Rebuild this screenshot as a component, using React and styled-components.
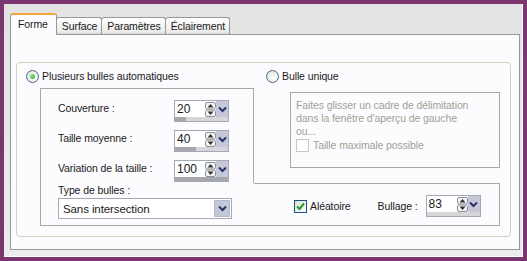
import React from 'react';
import styled, { createGlobalStyle } from 'styled-components';

const GlobalStyle = createGlobalStyle`
  html, body {
    margin: 0;
    padding: 0;
    background: #7b3671;
  }
  body {
    font-family: "Liberation Sans", Arial, sans-serif;
    font-size: 10.5px;
    letter-spacing: -0.1px;
    color: #1a1a1a;
  }
`;

const Window = styled.div`
  width: 527px;
  height: 261px;
  box-sizing: border-box;
  border: 4px solid #7b3671;
  background: linear-gradient(#e3e3e3, #ececec);
  box-shadow: inset -1px -1px 0 #ffffff;
  padding: 9px 3px 0 6px;
`;

const TabStrip = styled.div`
  display: flex;
  align-items: flex-end;
  height: 21px;
`;

const Tab = styled.div`
  position: relative;
  box-sizing: border-box;
  height: ${p => (p.$active ? '22px' : '17px')};
  margin-bottom: ${p => (p.$active ? '-1px' : '0')};
  z-index: ${p => (p.$active ? 2 : 1)};
  padding: ${p => (p.$active ? '3px 8px 0 7px' : '2px 4px 0 5px')};
  border: 1px solid #919b9c;
  border-bottom: none;
  border-top: ${p => (p.$active ? '2px solid #f2a83b' : '1px solid #919b9c')};
  border-radius: 3px 3px 0 0;
  background: ${p => (p.$active ? '#fcfcfe' : 'linear-gradient(#ffffff, #ececeb 85%, #dcdcd8)')};
  margin-left: ${p => (p.$first ? '0' : '-1px')};
  white-space: nowrap;
  line-height: 13px;
`;

const Panel = styled.div`
  box-sizing: border-box;
  height: 216px;
  border: 1px solid #919b9c;
  background: #fcfcfe;
  padding: 27px 8px 0 5px;
`;

const Group = styled.div`
  box-sizing: border-box;
  height: 175px;
  border: 1px solid #d0d0bf;
  border-radius: 4px;
  padding: 6px 10px 0 9px;
`;

const RadioRow = styled.div`
  display: grid;
  grid-template-columns: 240px 1fr;
  height: 14px;
`;

const Option = styled.label`
  display: flex;
  align-items: center;
  gap: 3px;
  line-height: 14px;
  color: ${p => (p.$disabled ? '#a19f95' : 'inherit')};
`;

const Body = styled.div`
  margin: 5px 0 0 14px;
  display: grid;
  grid-template-columns: 214px 246px;
  grid-template-rows: 95px 43px;
`;

const Frame = styled.div`
  box-sizing: border-box;
  border-color: #a9a9a9;
  border-style: solid;
  border-width: ${p => p.$edges};
`;

const LeftTop = styled(Frame)`
  padding: 11px 0 0 17px;
  display: flex;
  flex-direction: column;
  gap: 8px;
`;

const LeftBottom = styled(Frame)`
  padding: 0 0 0 17px;
`;

const RightTop = styled.div`
  padding: 4px 0 0 36px;
`;

const RightBottom = styled(Frame)`
  display: flex;
  align-items: center;
  padding: 3px 0 0 40px;
`;

const SpinRow = styled.div`
  display: flex;
  align-items: flex-start;
  height: 22px;
`;

const FieldLabel = styled.span`
  width: ${p => p.$width || 'auto'};
  margin: ${p => p.$margin || '0'};
  line-height: 17px;
  white-space: nowrap;
`;

const SpinWrap = styled.div`
  box-sizing: border-box;
  width: 55px;
  height: 22px;
  display: flex;
  flex-direction: column;
  border: 1px solid #a3aab5;
  background: #fff;
`;

const SpinTop = styled.div`
  display: flex;
  align-items: center;
  height: 16px;
`;

const SpinValue = styled.span`
  flex: 1;
  padding-left: 2px;
  line-height: 16px;
  font-size: 12px;
  letter-spacing: 0;
`;

const ArrowBox = styled.div`
  display: flex;
  align-items: center;
  justify-content: center;
  height: 16px;
`;

const ChevronBox = styled.div`
  width: 12px;
  height: 16px;
  background: #c6c8d9;
  display: flex;
  align-items: center;
  justify-content: center;
`;

const SpinBar = styled.div`
  height: 4px;
  background: #d6d6d8;
  display: flex;
`;

const SpinFill = styled.div`
  height: 100%;
  background: #a6a7ad;
`;

const DisabledBox = styled.div`
  box-sizing: border-box;
  width: 210px;
  height: 76px;
  border: 1px solid #a9a9a9;
  padding: 6px 5px 0 5px;
  color: #a19f95;
  line-height: 13px;
`;

const DisabledCheck = styled.div`
  display: flex;
  align-items: center;
  gap: 4px;
  margin-top: 1px;
`;

const TypeLabel = styled.div`
  line-height: 13px;
  margin-top: 1px;
`;

const Select = styled.div`
  box-sizing: border-box;
  width: 174px;
  height: 21px;
  margin-top: 1px;
  border: 1px solid #a3aab5;
  background: #fff;
  display: flex;
  align-items: center;
  font-size: 11.5px;
`;

const SelectText = styled.span`
  flex: 1;
  padding-left: 4px;
`;

const SelectButton = styled.div`
  width: 16px;
  height: 17px;
  margin-right: 1px;
  background: #c4c7d8;
  border: 1px solid #b5b8c8;
  box-sizing: border-box;
  display: flex;
  align-items: center;
  justify-content: center;
`;

const Check = styled.span`
  box-sizing: border-box;
  width: 13px;
  height: 13px;
  border: 1px solid ${p => (p.$disabled ? '#cac8bb' : '#1c5180')};
  background: ${p => (p.$disabled ? '#fff' : 'linear-gradient(135deg, #dcdcd7, #fff)')};
  display: inline-flex;
  align-items: center;
  justify-content: center;
  flex: none;
`;

const RadioDot = styled.span`
  box-sizing: border-box;
  width: 13px;
  height: 13px;
  border-radius: 50%;
  border: 1px solid #3d6a94;
  background: radial-gradient(circle at 65% 65%, #fff, #dcdcd7);
  display: inline-flex;
  align-items: center;
  justify-content: center;
  flex: none;

  &::after {
    content: "";
    display: ${p => (p.$on ? 'block' : 'none')};
    width: 5px;
    height: 5px;
    border-radius: 50%;
    background: radial-gradient(circle at 35% 35%, #8fe88f, #21a121);
  }
`;

const UpDown = () => (
  <svg width="11" height="15" viewBox="0 0 11 15">
    <rect x="0.5" y="0.5" width="10" height="6.5" rx="1.5" fill="#f3f3f3" stroke="#8b8f98" />
    <rect x="0.5" y="8" width="10" height="6.5" rx="1.5" fill="#f3f3f3" stroke="#8b8f98" />
    <path d="M5.5 2 L8.5 5.5 L2.5 5.5 Z" fill="#333" />
    <path d="M5.5 13 L8.5 9.5 L2.5 9.5 Z" fill="#333" />
  </svg>
);

const Chevron = () => (
  <svg width="9" height="7" viewBox="0 0 9 7">
    <path d="M1 1.5 L4.5 5 L8 1.5" fill="none" stroke="#26346a" strokeWidth="2" />
  </svg>
);

const Tick = () => (
  <svg width="9" height="9" viewBox="0 0 9 9">
    <path d="M1 4.5 L3.5 7 L8 1.5" fill="none" stroke="#21a121" strokeWidth="2" />
  </svg>
);

const Spin = ({ value, fill }) => (
  <SpinWrap>
    <SpinTop>
      <SpinValue>{value}</SpinValue>
      <ArrowBox><UpDown /></ArrowBox>
      <ChevronBox><Chevron /></ChevronBox>
    </SpinTop>
    <SpinBar>
      <SpinFill style={{ width: `${fill}%` }} />
    </SpinBar>
  </SpinWrap>
);

const fields = [
  { label: 'Couverture :', value: 20, fill: 20 },
  { label: 'Taille moyenne :', value: 40, fill: 40 },
  { label: 'Variation de la taille :', value: 100, fill: 100 },
];

const tabs = ['Forme', 'Surface', 'Paramètres', 'Éclairement'];

export default function App() {
  return (
    <>
      <GlobalStyle />
      <Window>
        <TabStrip>
          {tabs.map((t, i) => (
            <Tab key={t} $active={i === 0} $first={i === 0}>{t}</Tab>
          ))}
        </TabStrip>
        <Panel>
          <Group>
            <RadioRow>
              <Option><RadioDot $on />Plusieurs bulles automatiques</Option>
              <Option><RadioDot />Bulle unique</Option>
            </RadioRow>
            <Body>
              <LeftTop $edges="1px 1px 0 1px">
                {fields.map(f => (
                  <SpinRow key={f.label}>
                    <FieldLabel $width="116px">{f.label}</FieldLabel>
                    <Spin value={f.value} fill={f.fill} />
                  </SpinRow>
                ))}
              </LeftTop>
              <RightTop>
                <DisabledBox>
                  Faites glisser un cadre de délimitation<br />
                  dans la fenêtre d'aperçu de gauche<br />
                  ou...
                  <DisabledCheck>
                    <Check $disabled />
                    Taille maximale possible
                  </DisabledCheck>
                </DisabledBox>
              </RightTop>
              <LeftBottom $edges="0 0 1px 1px">
                <TypeLabel>Type de bulles :</TypeLabel>
                <Select>
                  <SelectText>Sans intersection</SelectText>
                  <SelectButton><Chevron /></SelectButton>
                </Select>
              </LeftBottom>
              <RightBottom $edges="1px 1px 1px 0">
                <Option><Check><Tick /></Check>Aléatoire</Option>
                <FieldLabel $margin="0 8px 0 27px">Bullage :</FieldLabel>
                <Spin value={83} fill={0} />
              </RightBottom>
            </Body>
          </Group>
        </Panel>
      </Window>
    </>
  );
}
